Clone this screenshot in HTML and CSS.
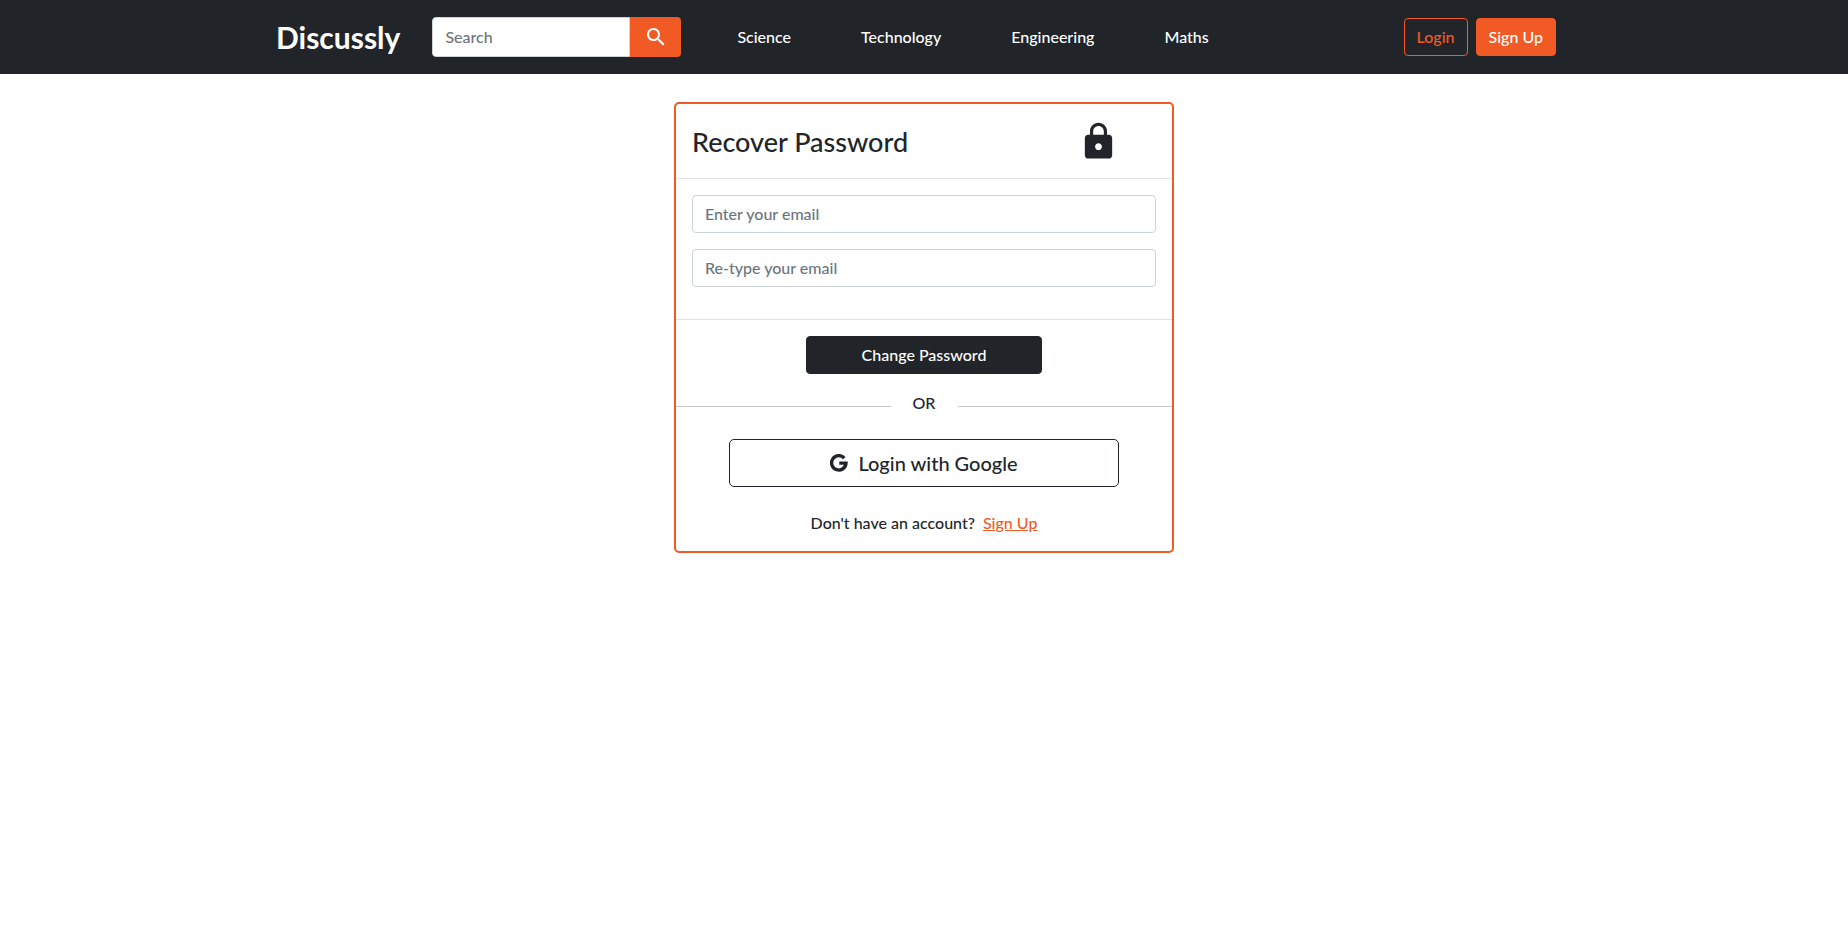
FILE: index.html
```html
<!DOCTYPE html>
<html lang="en">
<head>
<meta charset="utf-8">
<meta name="viewport" content="width=device-width, initial-scale=1">
<title>Recover Password - Discussly</title>
<link rel="stylesheet" href="styles.css">
</head>
<body>
<header class="navbar">
  <div class="container">
    <a class="brand" href="#">Discussly</a>
    <form class="search" role="search">
      <input class="search-input" type="search" placeholder="Search" aria-label="Search">
      <button class="search-button" type="submit" aria-label="Search">
        <svg width="24" height="24" viewBox="0 0 24 24" fill="currentColor" aria-hidden="true"><path d="M15.5 14h-.79l-.28-.27C15.41 12.59 16 11.11 16 9.5 16 5.91 13.09 3 9.5 3S3 5.91 3 9.5 5.91 16 9.5 16c1.61 0 3.09-.59 4.23-1.57l.27.28v.79l5 4.99L20.49 19l-4.99-5zm-6 0C7.01 14 5 11.99 5 9.5S7.01 5 9.5 5 14 7.01 14 9.5 11.99 14 9.5 14z"/></svg>
      </button>
    </form>
    <nav class="topics">
      <a href="#">Science</a>
      <a href="#">Technology</a>
      <a href="#">Engineering</a>
      <a href="#">Maths</a>
    </nav>
    <div class="account">
      <button class="btn btn-outline" type="button">Login</button>
      <button class="btn btn-primary" type="button">Sign Up</button>
    </div>
  </div>
</header>
<main class="page">
  <section class="card">
    <div class="card-header">
      <h1>Recover Password</h1>
      <svg class="lock" width="41" height="41" viewBox="0 0 24 24" fill="currentColor" aria-hidden="true"><path d="M18 8h-1V6c0-2.76-2.24-5-5-5S7 3.24 7 6v2H6c-1.1 0-2 .9-2 2v10c0 1.1.9 2 2 2h12c1.1 0 2-.9 2-2V10c0-1.1-.9-2-2-2zm-6 9c-1.1 0-2-.9-2-2s.9-2 2-2 2 .9 2 2-.9 2-2 2zm3.1-9H8.9V6c0-1.71 1.39-3.1 3.1-3.1s3.1 1.39 3.1 3.1v2z"/></svg>
    </div>
    <form id="recover" class="card-body">
      <input class="field" type="email" placeholder="Enter your email" aria-label="Enter your email">
      <input class="field" type="email" placeholder="Re-type your email" aria-label="Re-type your email">
    </form>
    <div class="card-footer">
      <button class="btn btn-dark" type="submit" form="recover">Change Password</button>
    </div>
    <div class="divider"><span>OR</span></div>
    <button class="btn-google" type="button">
      <svg width="18" height="18" viewBox="0 0 18 18" fill="none" stroke="currentColor" stroke-width="3.4" aria-hidden="true"><path d="M14.3 4.2A7.2 7.2 0 1 0 16 9.1H9.3"/></svg>
      Login with Google
    </button>
    <p class="signup">Don't have an account? <a href="#">Sign Up</a></p>
  </section>
</main>
</body>
</html>
```

FILE: styles.css
```css
* {
  box-sizing: border-box;
}

body {
  margin: 0;
  background: #fff;
  color: #212529;
  font-family: Lato, "Open Sans", sans-serif;
  font-size: 16px;
  font-weight: 500;
  line-height: 24px;
}

button,
input {
  font: inherit;
}

button {
  cursor: pointer;
}

.navbar {
  background: #212529;
  padding: 17px 0;
}

.container {
  display: flex;
  align-items: center;
  max-width: 1320px;
  margin: 0 auto;
  padding: 0 28px 0 12px;
}

.brand {
  color: #fff;
  font-size: 30px;
  font-weight: 700;
  line-height: 40px;
  text-decoration: none;
}

.search {
  display: flex;
  width: 249px;
  margin-left: 32px;
}

.search-input {
  flex: 1;
  min-width: 0;
  height: 40px;
  padding: 6px 12px 8px;
  border: 1px solid #ced4da;
  border-radius: 4px 0 0 4px;
  background: #fff;
  color: #212529;
}

.search-input::placeholder,
.field::placeholder {
  color: #6c757d;
  opacity: 1;
}

.search-button {
  display: flex;
  align-items: center;
  justify-content: center;
  width: 51px;
  padding: 0;
  border: 0;
  border-radius: 0 4px 4px 0;
  background: #f15a24;
  color: #fff;
}

.topics {
  display: flex;
  gap: 70px;
  margin-left: 56px;
}

.topics a {
  color: #fff;
  text-decoration: none;
}

.account {
  display: flex;
  gap: 8px;
  margin-left: auto;
}

.btn {
  height: 38px;
  padding: 6px 12px;
  border: 1px solid #f15a24;
  border-radius: 4px;
}

.btn-outline {
  background: transparent;
  color: #f15a24;
}

.btn-primary {
  background: #f15a24;
  color: #fff;
}

.btn-dark {
  width: 236px;
  border-color: #212529;
  background: #212529;
  color: #fff;
}

.page {
  padding: 28px 16px;
}

.card {
  display: flex;
  flex-direction: column;
  max-width: 500px;
  margin: 0 auto;
  border: 2px solid #f15a24;
  border-radius: 5px;
}

.card-header {
  display: flex;
  align-items: center;
  justify-content: space-between;
  padding: 17px 53px 16px 16px;
  border-bottom: 1px solid #dee2e6;
}

h1 {
  margin: 0;
  font-size: 27px;
  font-weight: 500;
  line-height: 40px;
}

.card-body {
  display: grid;
  gap: 16px;
  padding: 16px 16px 32px;
}

.field {
  width: 100%;
  height: 38px;
  padding: 5px 12px 7px;
  border: 1px solid #ced4da;
  border-radius: 4px;
  background: #fff;
  color: #212529;
}

.card-footer {
  display: flex;
  justify-content: center;
  padding: 16px 16px 17px;
  border-top: 1px solid #dee2e6;
}

.divider {
  display: flex;
  align-items: flex-start;
  text-align: center;
}

.divider::before,
.divider::after {
  content: "";
  flex: 1;
  height: 1px;
  margin-top: 15px;
  background: #c8c9ca;
}

.divider span {
  width: 67px;
}

.btn-google {
  display: flex;
  align-items: center;
  justify-content: center;
  gap: 10px;
  align-self: center;
  width: 390px;
  max-width: 100%;
  height: 48px;
  margin: 24px 0;
  border: 1px solid #212529;
  border-radius: 5px;
  background: #fff;
  color: #212529;
  font-size: 20px;
}

.signup {
  margin: 0 0 16px;
  text-align: center;
}

.signup a {
  margin-left: 4px;
  color: #f15a24;
}
```
